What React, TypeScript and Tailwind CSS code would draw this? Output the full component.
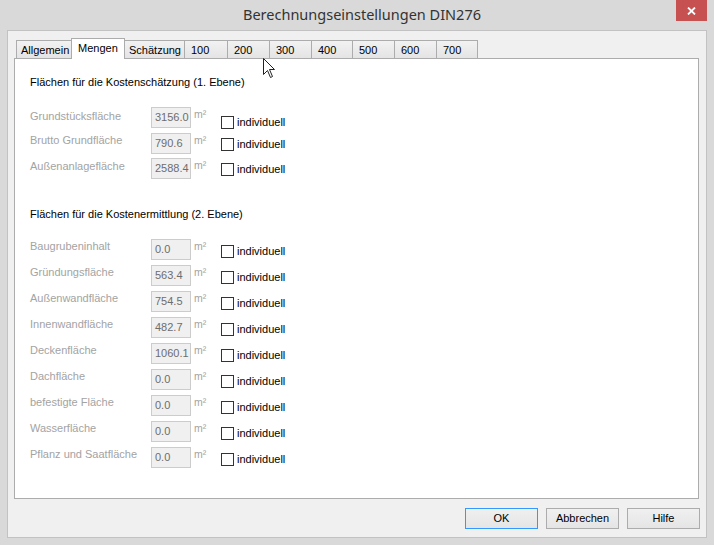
import React from 'react';

type RowData = { label: string; value: string; lo: number; co: number; mt: number };

const rows1: RowData[] = [
  { label: 'Grundstücksfläche', value: '3156.0', lo: 2, co: 8, mt: 18 },
  { label: 'Brutto Grundfläche', value: '790.6', lo: 0, co: 4, mt: 5 },
  { label: 'Außenanlagefläche', value: '2588.4', lo: 1, co: 4, mt: 4 },
];

const rows2: RowData[] = [
  { label: 'Baugrubeninhalt', value: '0.0', lo: 0, co: 5, mt: 18 },
  { label: 'Gründungsfläche', value: '563.4', lo: 0, co: 5, mt: 5 },
  { label: 'Außenwandfläche', value: '754.5', lo: 0, co: 5, mt: 5 },
  { label: 'Innenwandfläche', value: '482.7', lo: 0, co: 5, mt: 5 },
  { label: 'Deckenfläche', value: '1060.1', lo: 0, co: 5, mt: 5 },
  { label: 'Dachfläche', value: '0.0', lo: 0, co: 5, mt: 5 },
  { label: 'befestigte Fläche', value: '0.0', lo: 0, co: 5, mt: 5 },
  { label: 'Wasserfläche', value: '0.0', lo: 0, co: 5, mt: 5 },
  { label: 'Pflanz und Saatfläche', value: '0.0', lo: 0, co: 5, mt: 5 },
];

function Row({ r }: { r: RowData }) {
  return (
    <div className="flex items-start h-[21px]" style={{ marginTop: r.mt }}>
      <div className="w-[121px] leading-[14px] text-[#a3a3a3] whitespace-nowrap" style={{ marginTop: r.lo }}>
        {r.label}
      </div>
      <div className="w-[40px] h-[21px] border border-[#cccccc] bg-[#f0f0f0] text-[#6d6d6d] leading-[19px] pl-[3px] whitespace-nowrap">
        {r.value}
      </div>
      <div className="w-[30px] pl-[3px] leading-[14px] text-[10.5px] text-[#a3a3a3]">
        m²
      </div>
      <div className="flex items-center" style={{ marginTop: r.co }}>
        <div className="w-[13px] h-[13px] border border-[#333333] bg-white" />
        <span className="ml-[3px] leading-[14px] whitespace-nowrap">individuell</span>
      </div>
    </div>
  );
}

const tabs: { t: string; w: string; pl: string }[] = [
  { t: 'Schätzung', w: 'w-[60px]', pl: 'pl-[4px]' },
  { t: '100', w: 'w-[43px]', pl: 'pl-[6px]' },
  { t: '200', w: 'w-[42px]', pl: 'pl-[6px]' },
  { t: '300', w: 'w-[42px]', pl: 'pl-[6px]' },
  { t: '400', w: 'w-[41px]', pl: 'pl-[6px]' },
  { t: '500', w: 'w-[42px]', pl: 'pl-[6px]' },
  { t: '600', w: 'w-[42px]', pl: 'pl-[6px]' },
  { t: '700', w: 'w-[41px]', pl: 'pl-[6px]' },
];

function Button({ label, primary }: { label: string; primary?: boolean }) {
  return (
    <div
      className={
        'w-[73px] h-[21px] flex items-center justify-center border bg-linear-to-b from-[#f0f0f0] to-[#e5e5e5] ' +
        (primary ? 'border-[#3399ff]' : 'border-[#acacac]')
      }
    >
      {label}
    </div>
  );
}

export default function App() {
  return (
    <div className="relative w-[714px] h-[545px] bg-[#d9d9d9] flex flex-col font-['Liberation_Sans',sans-serif] text-[11px] text-black overflow-hidden select-none">
      <div className="h-[30px] shrink-0 flex items-center justify-center pl-[10px]">
        <span className="font-['Noto_Sans',sans-serif] text-[14.5px] text-[#333333]">Berechnungseinstellungen DIN276</span>
      </div>
      <div className="absolute top-0 right-[7px] w-[31px] h-[21px] bg-[#c75050] flex items-center justify-center">
        <svg width="9" height="8" viewBox="0 0 9 8">
          <path d="M1 0.5 L8 7.5 M8 0.5 L1 7.5" stroke="white" strokeWidth="1.8" />
        </svg>
      </div>

      <div className="mx-[7px] h-[508px] shrink-0 border border-[#c2c2c2] bg-[#f0f0f0] flex flex-col pt-[7px] pl-[6px] pr-[6px]">
        <div className="h-[20px] flex items-end pl-[2px]">
          <div className="w-[56px] h-[18px] border-l border-t border-r border-[#acacac] bg-linear-to-b from-[#f2f2f2] to-[#e4e4e4] flex items-center pl-[4px] pt-px">
            Allgemein
          </div>
          <div className="relative z-10 -ml-px w-[54px] h-[21px] -mb-px border-l border-t border-r border-[#acacac] bg-white flex items-center pl-[6px] pb-px">
            Mengen
          </div>
          {tabs.map((t) => (
            <div
              key={t.t}
              className={t.w + ' ' + t.pl + ' h-[18px] border-t border-r border-[#acacac] bg-linear-to-b from-[#f2f2f2] to-[#e4e4e4] flex items-center pt-px'}
            >
              {t.t}
            </div>
          ))}
        </div>

        <div className="h-[441px] mr-px border border-[#acacac] bg-white flex flex-col pl-[15px] pt-[16px]">
          <div className="leading-[14px]">Flächen für die Kostenschätzung (1. Ebene)</div>
          {rows1.map((r) => (
            <Row key={r.label} r={r} />
          ))}
          <div className="leading-[14px] mt-[28px]">Flächen für die Kostenermittlung (2. Ebene)</div>
          {rows2.map((r) => (
            <Row key={r.label} r={r} />
          ))}
        </div>

        <div className="mt-[9px] flex justify-end gap-[8px]">
          <Button label="OK" primary />
          <Button label="Abbrechen" />
          <Button label="Hilfe" />
        </div>
      </div>

      <svg className="absolute left-[263px] top-[58px]" width="13" height="21" viewBox="0 0 13 21">
        <path d="M0.5 0.5 L0.5 16.5 L4.5 12.5 L7.5 19.5 L9.5 18.5 L6.5 11.5 L11.5 11.5 Z" fill="white" stroke="#222" strokeWidth="1" strokeLinejoin="miter" />
      </svg>
    </div>
  );
}
